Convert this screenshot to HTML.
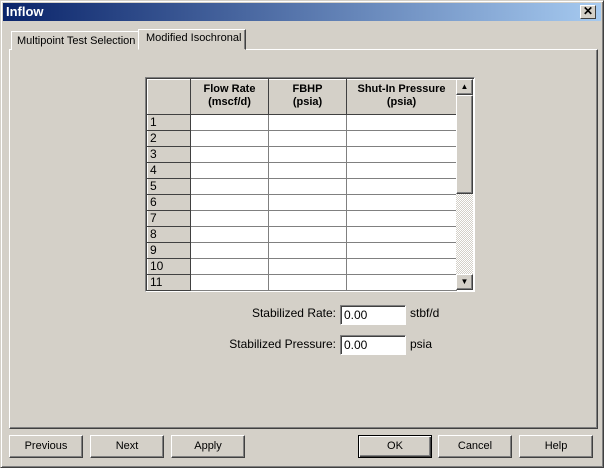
<!DOCTYPE html>
<html><head><style>
*{margin:0;padding:0;box-sizing:border-box}
body{width:604px;height:468px;background:#d4d0c8;font-family:"Liberation Sans",sans-serif;font-size:11px;position:relative;overflow:hidden}
.abs{position:absolute}
.win{left:0;top:0;width:604px;height:468px;border:1px solid;border-color:#d4d0c8 #404040 #404040 #d4d0c8;box-shadow:inset 1px 1px #fff,inset -1px -1px #808080}
.title{left:3px;top:3px;width:598px;height:18px;background:linear-gradient(90deg,#0a246a,#a6caf0);color:#fff;font-weight:bold;font-size:13px;padding:1px 3px}
.xb{left:580px;top:5px;width:16px;height:14px;background:#d4d0c8;border:1px solid;border-color:#fff #404040 #404040 #fff;font-size:12px;font-weight:bold;text-align:center;line-height:11px}
.raised{border:1px solid;border-color:#fff #404040 #404040 #fff;box-shadow:inset -1px -1px #808080}
.panel{left:9px;top:49px;width:589px;height:380px;border:1px solid;border-color:#fff #404040 #404040 #fff;box-shadow:inset -1px -1px #808080}
.tab{border:1px solid;border-bottom:none;border-color:#fff #404040 #fff #fff;box-shadow:inset -1px 0 #808080;padding:3px 5px;background:#d4d0c8;white-space:nowrap;font-size:11px}
.btn{top:435px;width:74px;height:23px;text-align:center;line-height:20px;font-size:11px;border:1px solid;border-color:#fff #404040 #404040 #fff;box-shadow:inset -1px -1px #808080}
table{border-collapse:collapse}
td{border:1px solid #808080;height:16px;padding:0}
.rh{background:#d4d0c8;border:1px solid;border-color:#fff #404040 #404040 #fff;padding-left:2px;font-size:12px;line-height:13px}
.sunk{border:1px solid;border-color:#808080 #fff #fff #808080;box-shadow:inset 1px 1px #404040;background:#fff;padding:2px 3px;font-size:12px}
</style></head><body>
<div class="abs win"></div>
<div class="abs title">Inflow</div>
<div class="abs xb">✕</div>
<div class="abs panel"></div>
<div class="abs tab" style="left:11px;top:31px;height:19px;padding-top:3px;padding-left:5px">Multipoint Test Selection</div>
<div class="abs tab" style="left:138px;top:29px;height:21px;padding-top:2px;padding-left:7px;width:108px;border-bottom:1px solid #d4d0c8">Modified Isochronal</div>
<div class="abs" style="left:145px;top:77px;width:330px;height:215px;border:1px solid;border-color:#808080 #fff #fff #808080;box-shadow:inset 1px 1px #404040;background:#fff;overflow:hidden">
<table style="position:absolute;left:1px;top:1px;width:309px;table-layout:fixed">
<col style="width:43px"><col style="width:78px"><col style="width:78px"><col style="width:110px">
<tr style="height:35px"><td class="rh" style="height:35px"></td><td class="rh" style="font-size:11px;font-weight:bold;text-align:center;padding:3px 0 0 0;vertical-align:top">Flow Rate<br>(mscf/d)</td><td class="rh" style="font-size:11px;font-weight:bold;text-align:center;padding:3px 0 0 0;vertical-align:top">FBHP<br>(psia)</td><td class="rh" style="font-size:11px;font-weight:bold;text-align:center;padding:3px 0 0 0;vertical-align:top">Shut-In Pressure<br>(psia)</td></tr>
<tr><td class="rh">1</td><td></td><td></td><td></td></tr>
<tr><td class="rh">2</td><td></td><td></td><td></td></tr>
<tr><td class="rh">3</td><td></td><td></td><td></td></tr>
<tr><td class="rh">4</td><td></td><td></td><td></td></tr>
<tr><td class="rh">5</td><td></td><td></td><td></td></tr>
<tr><td class="rh">6</td><td></td><td></td><td></td></tr>
<tr><td class="rh">7</td><td></td><td></td><td></td></tr>
<tr><td class="rh">8</td><td></td><td></td><td></td></tr>
<tr><td class="rh">9</td><td></td><td></td><td></td></tr>
<tr><td class="rh">10</td><td></td><td></td><td></td></tr>
<tr><td class="rh">11</td><td></td><td></td><td></td></tr>
<tr><td class="rh">12</td><td></td><td></td><td></td></tr>
</table>
<div class="abs" style="left:310px;top:1px;width:17px;height:211px;background:repeating-conic-gradient(#fff 0 25%,#d4d0c8 0 50%) 0 0/2px 2px"></div>
<div class="abs raised" style="left:310px;top:1px;width:17px;height:16px;background:#d4d0c8;font-size:8px;text-align:center;line-height:13px">▲</div>
<div class="abs raised" style="left:310px;top:17px;width:17px;height:99px;background:#d4d0c8"></div>
<div class="abs raised" style="left:310px;top:196px;width:17px;height:16px;background:#d4d0c8;font-size:8px;text-align:center;line-height:13px">▼</div>
</div>
<div class="abs" style="left:200px;top:306px;width:136px;text-align:right;font-size:12px">Stabilized Rate:</div>
<div class="abs sunk" style="left:340px;top:305px;width:66px;height:20px">0.00</div>
<div class="abs" style="left:410px;top:306px;font-size:12px">stbf/d</div>
<div class="abs" style="left:200px;top:337px;width:136px;text-align:right;font-size:12px">Stabilized Pressure:</div>
<div class="abs sunk" style="left:340px;top:335px;width:66px;height:20px">0.00</div>
<div class="abs" style="left:410px;top:337px;font-size:12px">psia</div>
<div class="abs btn" style="left:9px">Previous</div>
<div class="abs btn" style="left:90px">Next</div>
<div class="abs btn" style="left:171px">Apply</div>
<div class="abs btn" style="left:358px;border:1px solid #000;box-shadow:inset 1px 1px #fff,inset -1px -1px #404040,inset -2px -2px #808080">OK</div>
<div class="abs btn" style="left:438px">Cancel</div>
<div class="abs btn" style="left:519px">Help</div>
</body></html>
